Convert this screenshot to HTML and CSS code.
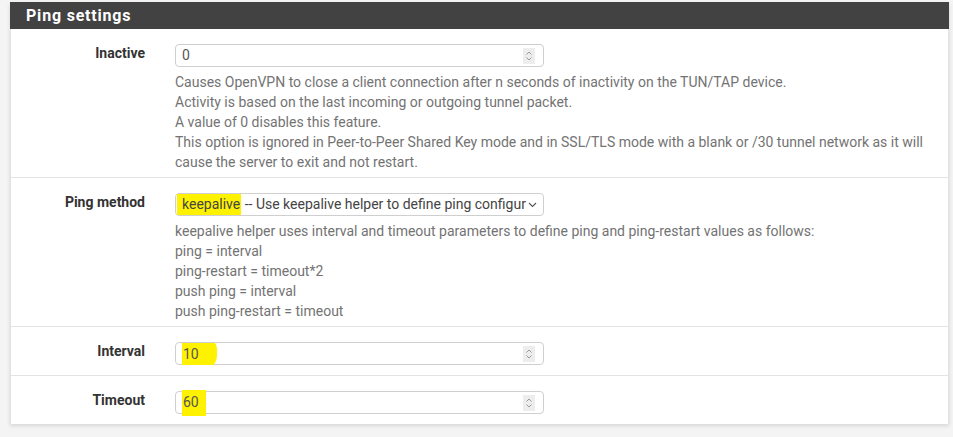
FILE: index.html
```html
<!DOCTYPE html>
<html>
<head>
<meta charset="utf-8">
<link rel="stylesheet" href="styles.css">
</head>
<body>
<div class="page">
  <div class="panel">
    <div class="panel-heading">Ping settings</div>
    <div class="panel-body">
      <div class="row row-help">
        <div class="label">Inactive</div>
        <div class="field">
          <div class="input"><span class="val">0</span><span class="spin"><svg width="12" height="16" viewBox="0 0 12 16"><path d="M3.5 6.5 L6 4 L8.5 6.5 M3.5 9.5 L6 12 L8.5 9.5" fill="none" stroke="#9a9a9a" stroke-width="1"/></svg></span></div>
          <div class="help">Causes OpenVPN to close a client connection after n seconds of inactivity on the TUN/TAP device.<br>Activity is based on the last incoming or outgoing tunnel packet.<br>A value of 0 disables this feature.<br>This option is ignored in Peer-to-Peer Shared Key mode and in SSL/TLS mode with a blank or /30 tunnel network as it will cause the server to exit and not restart.</div>
        </div>
      </div>
      <div class="row row-help">
        <div class="label">Ping method</div>
        <div class="field">
          <div class="input select"><span class="val"><mark class="hl hl-word">keepalive</mark> -- Use keepalive helper to define ping configur</span><span class="caret"><svg width="9" height="6" viewBox="0 0 9 6"><path d="M1 1 L4.5 4.5 L8 1" fill="none" stroke="#555" stroke-width="1.1"/></svg></span></div>
          <div class="help">keepalive helper uses interval and timeout parameters to define ping and ping-restart values as follows:<br>ping = interval<br>ping-restart = timeout*2<br>push ping = interval<br>push ping-restart = timeout</div>
        </div>
      </div>
      <div class="row">
        <div class="label">Interval</div>
        <div class="field">
          <div class="input"><span class="val"><mark class="hl hl-blob">10</mark></span><span class="spin"><svg width="12" height="16" viewBox="0 0 12 16"><path d="M3.5 6.5 L6 4 L8.5 6.5 M3.5 9.5 L6 12 L8.5 9.5" fill="none" stroke="#9a9a9a" stroke-width="1"/></svg></span></div>
        </div>
      </div>
      <div class="row">
        <div class="label">Timeout</div>
        <div class="field">
          <div class="input"><span class="val"><mark class="hl hl-box">60</mark></span><span class="spin"><svg width="12" height="16" viewBox="0 0 12 16"><path d="M3.5 6.5 L6 4 L8.5 6.5 M3.5 9.5 L6 12 L8.5 9.5" fill="none" stroke="#9a9a9a" stroke-width="1"/></svg></span></div>
        </div>
      </div>
    </div>
  </div>
</div>
</body>
</html>
```

FILE: styles.css
```css
* { box-sizing: border-box; }
html, body { margin: 0; padding: 0; }
body {
  background: #f4f4f4;
  font-family: Roboto, "Liberation Sans", sans-serif;
  font-size: 14px;
  color: #333;
  width: 953px;
  height: 437px;
  overflow: hidden;
}
.page {
  padding: 2px 4px 0 10px;
}
.panel {
  width: 939px;
  background: #fff;
  box-shadow: 0 2px 4px rgba(0,0,0,0.12);
}
.panel-heading {
  height: 27px;
  line-height: 28px;
  background: #424242;
  color: #fff;
  font-size: 16px;
  font-weight: 700;
  letter-spacing: 0.8px;
  padding-left: 16px;
}
.panel-body {
  border-left: 1px solid #e2e2e2;
  border-right: 1px solid #e2e2e2;
}
.row {
  display: grid;
  grid-template-columns: 134px 1fr;
  column-gap: 30px;
  padding: 15px 15px 10px 0;
  border-bottom: 1px solid #e3e3e3;
}
.row:last-child { border-bottom: none; }
.row-help { padding-bottom: 5px; }
.label {
  text-align: right;
  font-weight: 700;
  font-size: 14px;
  color: #333;
  line-height: 23px;
  margin-top: -2px;
}
.field { min-width: 0; }
.input {
  width: 369px;
  height: 23px;
  border: 1px solid #cfcfcf;
  border-radius: 4px;
  background: #fff;
  display: flex;
  align-items: center;
  padding-left: 6px;
  padding-right: 8px;
  font-size: 14px;
  color: #555;
}
.val {
  flex: 1;
  white-space: nowrap;
  overflow: hidden;
  line-height: 21px;
}
.spin {
  width: 12px;
  height: 16px;
  background: #ededed;
  display: flex;
}
.select { padding-left: 1px; padding-right: 6px; }
.select .val { color: #444; }
.caret { display: flex; flex: none; width: 9px; height: 6px; margin-top: 1px; margin-left: 1px; }
.hl {
  background: #fff200;
  color: inherit;
}
.hl-word {
  display: inline-block;
  padding: 2px 1px 3px 6px;
  margin: -3px 0 -4px -1px;
}
.hl-blob {
  display: inline-block;
  padding: 5px 18px 6px 7px;
  margin: -4px 0 -6px -6px;
  border-radius: 8px 10px 16px 2px;
}
.hl-box {
  display: inline-block;
  padding: 2px 7px 3px 7px;
  margin-left: -6px;
}
.help {
  margin-top: 5px;
  color: #737373;
  font-size: 14px;
  line-height: 20px;
}
```
